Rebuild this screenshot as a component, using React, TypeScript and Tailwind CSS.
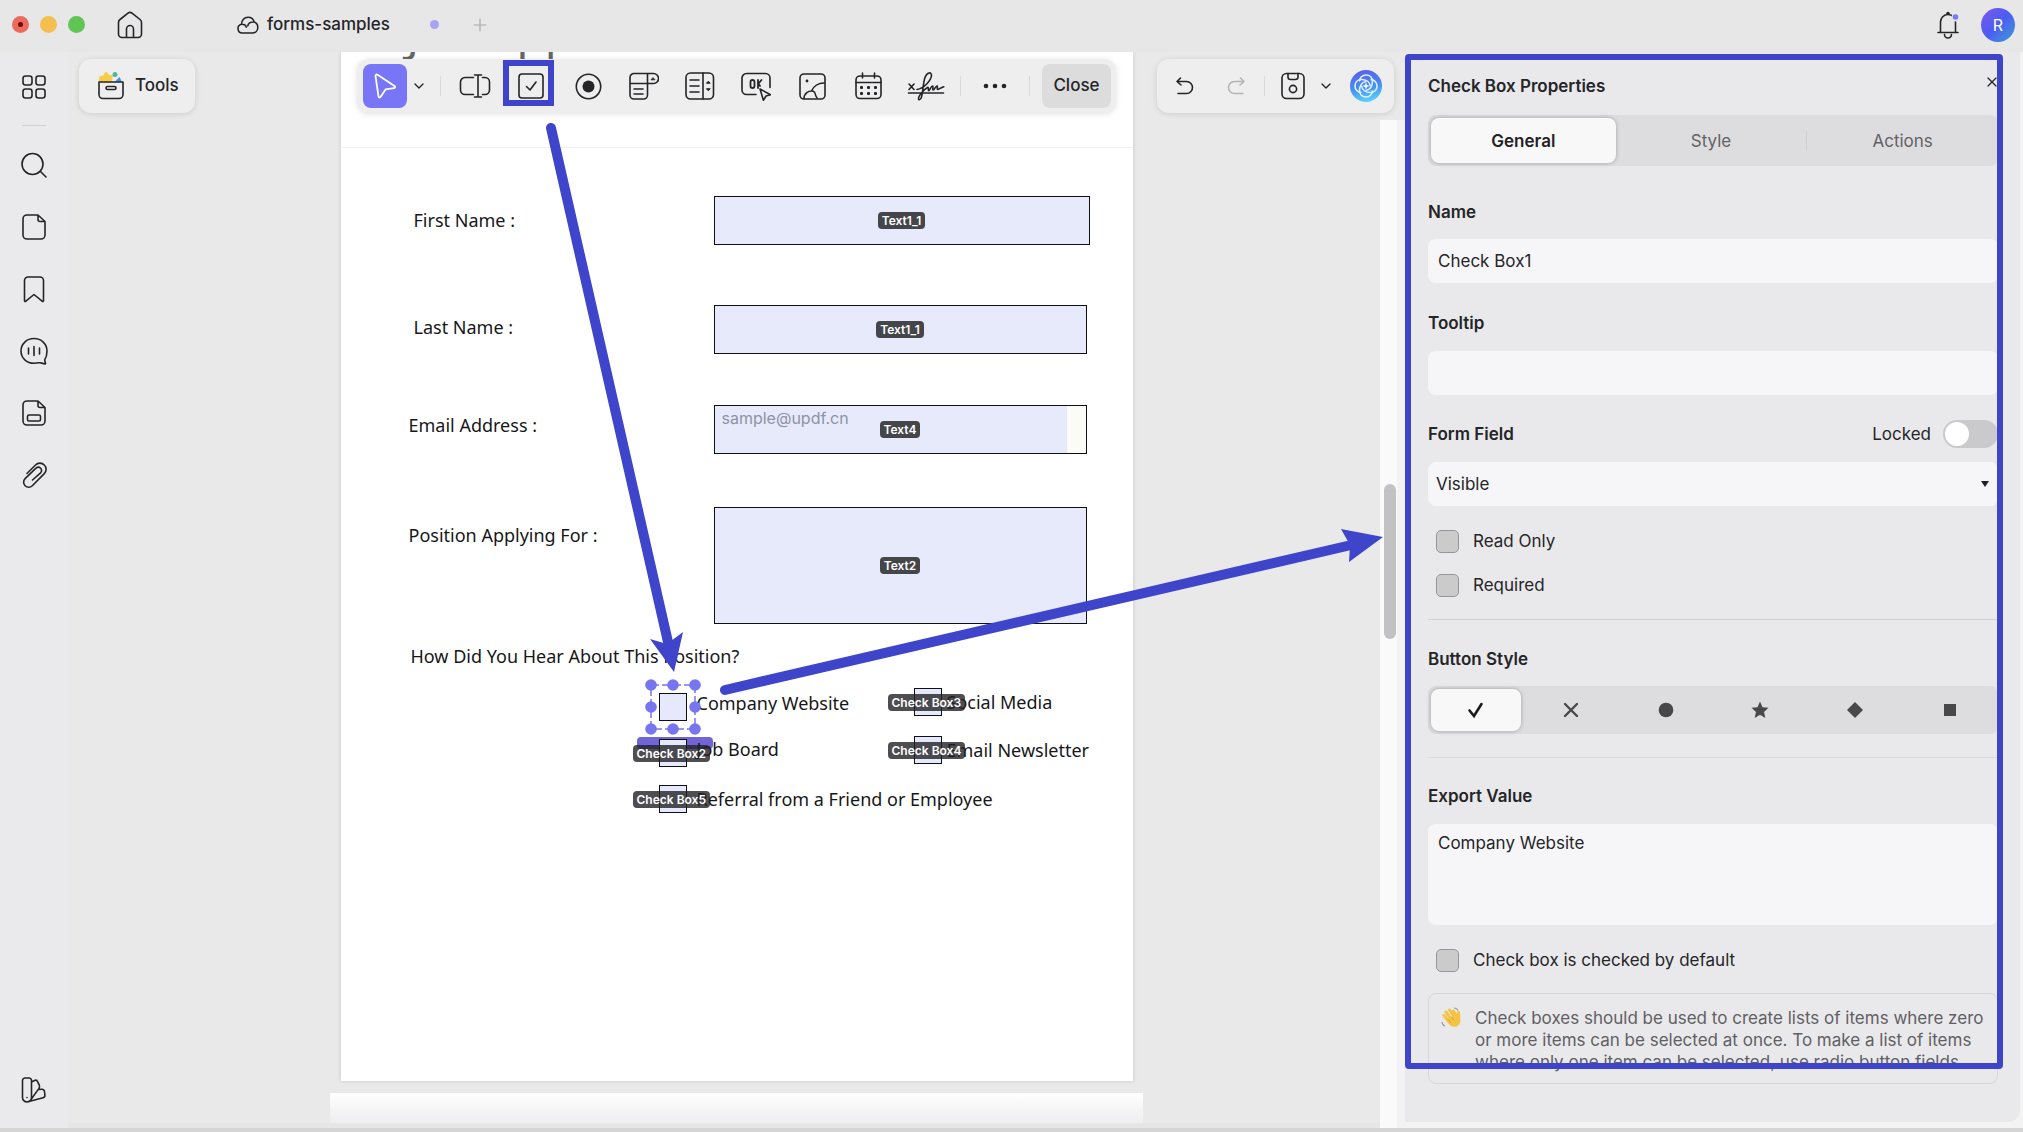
import type { ReactNode } from 'react';
import { useState } from 'react';
import { ChevronDown, Plus, X } from 'lucide-react';

type IconProps = {
  w: number;
  h: number;
  children: ReactNode;
  className?: string;
};

// outline icon, drawn at its natural size
function Icon({ w, h, children, className = '' }: IconProps) {
  return (
    <svg
      width={w}
      height={h}
      viewBox={`0 0 ${w} ${h}`}
      fill="none"
      stroke="currentColor"
      strokeWidth={1.6}
      strokeLinecap="round"
      strokeLinejoin="round"
      className={`shrink-0 ${className}`}
      aria-hidden="true"
    >
      {children}
    </svg>
  );
}

const sidebarItems = [
  {
    label: 'Search',
    icon: (
      <Icon w={28} h={28}>
        <circle cx="12.5" cy="13" r="10.5" />
        <path d="M20.5 20.5 26 26" />
      </Icon>
    ),
  },
  {
    label: 'Pages',
    icon: (
      <Icon w={28} h={28}>
        <path d="M18 2H7a4 4 0 0 0-4 4v16a4 4 0 0 0 4 4h14a4 4 0 0 0 4-4V8.500zM18 2v4.500a2 2 0 0 0 2 2h5" />
      </Icon>
    ),
  },
  {
    label: 'Bookmarks',
    icon: (
      <Icon w={28} h={28}>
        <path d="M8 2h12a3.500 3.500 0 0 1 3.500 3.500V25.500a.8.8 0 0 1-1.400.7L14 19.500l-8.100 6.700a.8.8 0 0 1-1.400-.7V5.500A3.500 3.500 0 0 1 8 2z" />
      </Icon>
    ),
  },
  {
    label: 'Comments',
    icon: (
      <Icon w={28} h={28}>
        <path d="M14 1.500C6.800 1.500 1 6.800 1 14s5.800 12.200 13 12.200c2.500 0 4.600-.3 6.300-.5 1.500.4 3.600 1.300 5 1.200.8-.1-.8-2.700-.5-4.200C26.300 20.300 27 17.400 27 14 27 6.800 21.200 1.500 14 1.500zM8.500 11v6M14 9.500v9M19.500 11v6" />
      </Icon>
    ),
  },
  {
    label: 'Form fields',
    icon: (
      <Icon w={28} h={28}>
        <path d="M18 2H7a4 4 0 0 0-4 4v16a4 4 0 0 0 4 4h14a4 4 0 0 0 4-4V8.500zM18 2v4.500a2 2 0 0 0 2 2h5" />
        <rect x="7.500" y="16" width="13" height="6" rx="1.500" />
      </Icon>
    ),
  },
  {
    label: 'Attachments',
    icon: (
      <Icon w={28} h={28}>
        <path d="M7 12.500 15.500 4a6 6 0 0 1 8.800 0 6 6 0 0 1 0 8.600L12.300 24.700a5 5 0 0 1-7.200 0 5 5 0 0 1 0-7.100L16 7.200a3.200 3.200 0 0 1 4.600 4.600L12.500 19" />
      </Icon>
    ),
  },
];

const cursorIcon = (
  <Icon w={24} h={28}>
    <path
      d="M2.500 4.200c-.2-1.300 1-2.100 2.100-1.400L21.500 14c1.100.8.700 2-.6 2.200l-8.200 1.100-5 7.500c-.7 1.100-2 .8-2.200-.4z"
      strokeWidth={1.8}
    />
  </Icon>
);

const textFieldIcon = (
  <Icon w={32} h={26}>
    <path d="M14.500 4.500H6a4.500 4.500 0 0 0-4.500 4.500v8A4.500 4.500 0 0 0 6 21.500h8.500M23.500 4.500H26A4.500 4.500 0 0 1 30.500 9v8a4.500 4.500 0 0 1-4.500 4.500h-2.500M19 2v22M15.500 2h7M15.500 24h7" />
  </Icon>
);

const checkBoxIcon = (
  <Icon w={26} h={26}>
    <rect x="1" y="1" width="24" height="24" rx="3" />
    <path d="m8.500 13.500 3.500 3.500 6-8" />
  </Icon>
);

const formTools = [
  {
    label: 'Radio Button',
    className: 'w-8',
    icon: (
      <Icon w={27} h={27}>
        <circle cx="13.500" cy="13.500" r="12.200" />
        <circle cx="13.500" cy="13.500" r="6" fill="currentColor" stroke="none" />
      </Icon>
    ),
  },
  {
    label: 'Dropdown',
    className: 'w-8',
    icon: (
      <Icon w={30} h={28}>
        <path d="M24 1.500H5a4 4 0 0 0-4 4V23a4 4 0 0 0 4 4h9.500a4 4 0 0 0 4-4V1.500M1 11.500h23.500a5 5 0 0 0 0-10M5 17h9M5 22h9" />
        <path d="m22.300 7.500 1.700-1.800 1.700 1.800z" fill="currentColor" strokeWidth={1} />
      </Icon>
    ),
  },
  {
    label: 'List Box',
    className: 'w-8',
    icon: (
      <Icon w={30} h={28}>
        <rect x="1" y="1" width="27.500" height="26" rx="4.500" />
        <path d="M18 1v26M5 8h9M5 14h9M5 20h9" />
        <path d="m21.700 11 1.600-1.800L24.900 11zM21.700 17l1.600 1.800 1.600-1.800z" fill="currentColor" strokeWidth={1} />
      </Icon>
    ),
  },
  {
    label: 'Push Button',
    className: 'w-8',
    icon: (
      <Icon w={30} h={30}>
        <path d="M15 23.500H5.500a4.500 4.500 0 0 1-4.500-4.500V7a4.500 4.500 0 0 1 4.500-4.500h19A4.500 4.500 0 0 1 29 7v9.500" />
        <rect x="9.500" y="9" width="4" height="8" rx="2" strokeWidth={1.800} />
        <path d="M17 9v8M20.500 9 17.500 12.500 19 15" strokeWidth={1.800} />
        <path d="m19 18 10.500 5.700-4.500 1.300-2.600 4.300z" />
      </Icon>
    ),
  },
  {
    label: 'Image',
    className: 'w-8',
    icon: (
      <Icon w={27} h={27}>
        <rect x="1" y="1" width="25" height="25" rx="4" />
        <path d="M5 25.500a7.500 7.500 0 0 1 9.300-7.300 3 3 0 0 1 1.800 2.300c.3 1.700 1 3.200 2 4.500M12.500 18c2-4.800 7-8.200 13-8" />
        <circle cx="8" cy="8" r="1.400" fill="currentColor" stroke="none" />
      </Icon>
    ),
  },
  {
    label: 'Date',
    className: 'w-8',
    icon: (
      <Icon w={27} h={28}>
        <rect x="1" y="4" width="25" height="22.500" rx="4" />
        <path d="M1 10.500h25M7.500 1v5M19.500 1v5" />
        <g fill="currentColor" stroke="none">
          <rect x="5" y="14" width="3" height="3" rx="1" />
          <rect x="12" y="14" width="3" height="3" rx="1" />
          <rect x="19" y="14" width="3" height="3" rx="1" />
          <rect x="5" y="20" width="3" height="3" rx="1" />
          <rect x="12" y="20" width="3" height="3" rx="1" />
          <rect x="19" y="20" width="3" height="3" rx="1" />
        </g>
      </Icon>
    ),
  },
  {
    label: 'Signature',
    className: 'w-9',
    icon: (
      <Icon w={38} h={30}>
        <path d="m2 13 5 5.500M7 13l-5 5.500M1.500 22h35" />
        <path d="M10 18.500c7-1 14-9 14.500-14C24.500.5 20 1 18 6.500c-2 5.500-2 14.500-3.500 19.500-.8 3-3 3.500-3 1.500 0-3 6-9.500 9-11 1.500-.7.500 2.500 1 3 1 .8 2.500-4.500 4-4.500 1.200 0-.5 4 .8 4 1.200 0 2.200-4 3.700-4 1.200 0-.5 3.500.8 3.500 1 0 3-2 6-2.800" />
      </Icon>
    ),
  },
];

function FieldTag({ children }: { children: ReactNode }) {
  return (
    <span className="rounded-sm bg-[#45464a] px-1 text-[12px] leading-[17px] font-semibold text-white">{children}</span>
  );
}

const textFields = [
  { id: 'first-name', label: 'First Name :', tag: 'Text1_1', row: 'mt-12 pl-[73px]', box: 'mr-[43px] h-[49px] w-[376px] bg-[#e6eafb]', text: 'pt-3' },
  { id: 'last-name', label: 'Last Name :', tag: 'Text1_1', row: 'mt-[60px] pl-[73px]', box: 'mr-[46px] h-[49px] w-[373px] bg-[#e6eafb]', text: 'pt-[10px]' },
  {
    id: 'email',
    label: 'Email Address :',
    tag: 'Text4',
    row: 'mt-[51px] pl-[68px]',
    box: 'mr-[46px] h-[49px] w-[373px] bg-linear-to-r from-[#e6eafb] from-95% to-[#fbfcf8] to-95%',
    text: 'pt-2',
    value: 'sample@updf.cn',
  },
  { id: 'position', label: 'Position Applying For :', tag: 'Text2', row: 'mt-[53px] pl-[68px]', box: 'mr-[46px] h-[117px] w-[373px] bg-[#e6eafb]', text: 'pt-4' },
];

type BoxFieldProps = { label: string; tag?: string; selected?: boolean; className?: string };

function BoxField({ label, tag, selected, className = 'gap-[10px]' }: BoxFieldProps) {
  return (
    <label className={`relative flex items-center ${className}`}>
      <input type="checkbox" className="size-7 shrink-0 appearance-none border border-[#101014] bg-[#e6e8fb]" />
      <span className="whitespace-nowrap">{label}</span>
      {tag && (
        <span className="absolute -left-[26px] flex rounded-sm bg-[#222225]/80 px-1 text-[12px] leading-[17px] font-semibold text-white font-[Inter,sans-serif]">
          {tag}
        </span>
      )}
      {selected && (
        <svg className="absolute -left-[15px] -top-[15px]" width="58" height="58" fill="#7775ef" aria-hidden="true">
          <rect x="7" y="7" width="44" height="44" fill="none" stroke="#7775ef" strokeWidth="1.500" strokeDasharray="8 3" />
          {[7, 29, 51].map((x) =>
            [7, 29, 51].map((y) => (x === 29 && y === 29 ? null : <circle key={`${x}-${y}`} cx={x} cy={y} r="5.800" />))
          )}
        </svg>
      )}
    </label>
  );
}

function DocumentPage() {
  return (
    <div className="relative h-[1029px] w-[792px] shrink-0 bg-white text-[18px] leading-6 text-[#17171a] shadow-[0_0_4px_rgba(0,0,0,0.15)] font-['Noto_Sans',sans-serif]">
      <div className="flex h-24 items-start border-b border-[#f1f1f3] pl-[66px]">
        <h1 className="-mt-[46px] text-[46px] leading-[56px] whitespace-nowrap text-[#666]">Job Application Form</h1>
      </div>

      {textFields.map((field) => (
        <div key={field.id} className={`flex ${field.row}`}>
          <label htmlFor={field.id} className={`flex-1 ${field.text}`}>
            {field.label}
          </label>
          <div className={`relative flex items-center justify-center border border-[#101014] font-[Inter,sans-serif] ${field.box}`}>
            <input
              id={field.id}
              defaultValue={field.value}
              className="absolute inset-0 h-6 px-[7px] text-[16px] text-[#8f93a6] outline-none"
            />
            <FieldTag>{field.tag}</FieldTag>
          </div>
        </div>
      ))}

      <p className="mt-5 pl-[70px]">How Did You Hear About This Position?</p>
      <div className="mt-5 flex">
        <div className="relative ml-[318px] flex w-[255px] flex-col gap-[18px] pt-[5px]">
          <span className="absolute -left-[22px] top-[49px] h-3 w-[76px] rounded-sm bg-[#7064d8]" />
          <BoxField label="Company Website" selected className="gap-[10px] [&>span]:pb-2 [&>span]:leading-5" />
          <BoxField label="Job Board" tag="Check Box2" className="gap-[10px] [&>span:first-of-type]:pb-2 [&>span:first-of-type]:leading-5" />
          <BoxField label="Referral from a Friend or Employee" tag="Check Box5" />
        </div>
        <div className="flex flex-col gap-5">
          <BoxField label="Social Media" tag="Check Box3" className="gap-[5px]" />
          <BoxField label="Email Newsletter" tag="Check Box4" className="gap-[5px]" />
        </div>
      </div>

      <svg className="pointer-events-none absolute left-0 top-0 overflow-visible" width="792" height="1029" aria-hidden="true">
        <g stroke="#3f45cb" strokeWidth="10" strokeLinecap="round">
          <path d="M210 76 327 590" />
          <path d="M384 638 1006 494" />
        </g>
        <path d="m309 587 17 5 16-12-9 40zM1000 477l9 16-1 17 34-25z" fill="#3f45cb" />
      </svg>
    </div>
  );
}

function FormToolbar() {
  return (
    <div className="flex h-[54px] items-center rounded-xl bg-[#eeeeef] pl-[6px] pr-[5px] shadow-[0_1px_6px_rgba(0,0,0,0.12)]">
      <button aria-label="Select" className="flex size-11 items-center justify-center rounded-lg bg-[#7876f6] text-white">
        {cursorIcon}
      </button>
      <button aria-label="Select options" className="flex w-[23px] justify-center">
        <ChevronDown size={16} />
      </button>
      <span className="ml-[10px] h-5 w-px bg-[#d9d9db]" />
      <button aria-label="Text Field" className="ml-[18px]">
        {textFieldIcon}
      </button>
      <button aria-label="Check Box" className="relative ml-[27px]">
        {checkBoxIcon}
        <span className="absolute -left-[15px] -right-[10px] -top-[13px] -bottom-[7px] border-6 border-[#3f45cb]" />
      </button>
      <div className="ml-7 flex items-center gap-6">
        {formTools.map((tool) => (
          <button key={tool.label} aria-label={tool.label} className={`flex justify-center ${tool.className}`}>
            {tool.icon}
          </button>
        ))}
      </div>
      <span className="ml-4 h-5 w-px bg-[#d9d9db]" />
      <button aria-label="More" className="ml-[22px]">
        <Icon w={24} h={6}>
          <g fill="currentColor" stroke="none">
            <circle cx="3" cy="3" r="2.300" />
            <circle cx="12" cy="3" r="2.300" />
            <circle cx="21" cy="3" r="2.300" />
          </g>
        </Icon>
      </button>
      <span className="ml-[22px] h-5 w-px bg-[#d9d9db]" />
      <button className="ml-3 h-11 w-[69px] rounded-lg bg-[#dcdcdd] text-[17px] font-medium">Close</button>
    </div>
  );
}

const petal = 'M9.500 11.500C9.500 7.500 12.500 5 16 5c4 0 6.500 2.800 6.500 6.500 0 4.500-2.500 8.500-7 9';

function HistoryToolbar() {
  return (
    <div className="flex h-[54px] w-[237px] items-center rounded-xl bg-[#eeeeef] pl-[18px] shadow-[0_1px_6px_rgba(0,0,0,0.12)]">
      <button aria-label="Undo">
        <Icon w={20} h={20}>
          <path d="M5.500 2 2 5.500 6 9M2 5.500h9.500a6 6 0 0 1 0 12H3" />
        </Icon>
      </button>
      <button aria-label="Redo" className="ml-[31px] text-[#b4b4b6]">
        <Icon w={20} h={20}>
          <path d="M14.500 2 18 5.500 14 9M18 5.500H8.500a6 6 0 0 0 0 12H17" />
        </Icon>
      </button>
      <span className="ml-[18px] h-5 w-px bg-[#d9d9db]" />
      <button aria-label="Save" className="ml-4">
        <Icon w={24} h={28}>
          <rect x="1" y="1.500" width="22" height="25" rx="4.500" />
          <path d="M7 1.500V5a2.500 2.500 0 0 0 2.500 2.500h5A2.500 2.500 0 0 0 17 5V1.500" />
          <circle cx="12" cy="17" r="3.600" />
        </Icon>
      </button>
      <button aria-label="Save options" className="ml-[13px]">
        <ChevronDown size={16} />
      </button>
      <button aria-label="Assistant" className="ml-4">
        <svg width="32" height="32" viewBox="0 0 32 32" fill="none" stroke="#dff3ff" strokeWidth="1.600" aria-hidden="true">
          <defs>
            <linearGradient id="assistant" x1="0.400" y1="0" x2="0.600" y2="1">
              <stop offset="0" stopColor="#5a5fee" />
              <stop offset="0.550" stopColor="#4590f4" />
              <stop offset="1" stopColor="#5ed5f8" />
            </linearGradient>
          </defs>
          <circle cx="16" cy="16" r="16" fill="url(#assistant)" stroke="none" />
          {[0, 90, 180, 270].map((angle) => (
            <path key={angle} d={petal} transform={`rotate(${angle} 16 16)`} />
          ))}
          <path d="m16 12.500 1 2.500 2.500 1-2.500 1-1 2.500-1-2.500-2.500-1 2.500-1z" fill="#fff" stroke="none" />
        </svg>
      </button>
    </div>
  );
}

const styleShapes = [
  { name: 'Check', shape: <path d="m3.500 10.500 4.500 5.500 7.500-12" stroke="currentColor" strokeWidth="2.600" fill="none" strokeLinecap="round" /> },
  { name: 'Cross', shape: <path d="m4 4 12 12M16 4 4 16" stroke="currentColor" strokeWidth="2.400" strokeLinecap="round" /> },
  { name: 'Circle', shape: <circle cx="10" cy="10" r="7.300" /> },
  { name: 'Star', shape: <path d="m10 1.500 2.500 5.700 6 .6-4.500 4.100 1.300 6.100-5.300-3.200L4.700 18 6 11.900 1.500 7.800l6-.6z" /> },
  { name: 'Diamond', shape: <path d="m10 2 8 8-8 8-8-8z" /> },
  { name: 'Square', shape: <path d="M4 4h12v12H4z" /> },
];

function PanelCheckbox({ id, label }: { id: string; label: string }) {
  return (
    <div className="flex items-center gap-[14px] pl-2">
      <input id={id} type="checkbox" className="size-[23px] appearance-none rounded-[5px] border border-[#96969a] bg-[#cbcbcc]" />
      <label htmlFor={id}>{label}</label>
    </div>
  );
}

function PropertiesPanel() {
  const [name, setName] = useState('Check Box1');
  const inputClass = 'block h-11 w-full rounded-lg bg-[#f6f6f8] px-[10px] outline-none';

  return (
    <aside className="relative w-[618px] shrink-0 bg-[#f3f3f4] pb-[6px] pr-[3px]">
      <div className="h-full overflow-hidden rounded-br-xl bg-[#e9e9eb] pl-[23px] pr-[22px] text-[17px] leading-6">
        <div className="flex items-start justify-between pt-[22px]">
          <h2 className="font-semibold">Check Box Properties</h2>
          <button aria-label="Close panel" className="-mr-[2px]">
            <X size={16} strokeWidth={1.8} />
          </button>
        </div>

        <div className="mt-[17px] flex h-[51px] gap-[3px] rounded-lg bg-[#dddddf] p-[3px] text-[#626266]">
          <button className="flex-1 rounded-lg bg-[#f8f8f9] font-semibold text-[#222224] shadow-[0_0_4px_rgba(0,0,0,0.28)]">General</button>
          <button className="flex-1">Style</button>
          <span className="my-auto h-5 w-px bg-[#d0d0d2]" />
          <button className="flex-1">Actions</button>
        </div>

        <label htmlFor="name" className="mt-[34px] block font-semibold">
          Name
        </label>
        <input id="name" value={name} onChange={(e) => setName(e.target.value)} className={`mt-[15px] ${inputClass}`} />

        <label htmlFor="tooltip" className="mt-7 block font-semibold">
          Tooltip
        </label>
        <input id="tooltip" className={`mt-4 ${inputClass}`} />

        <div className="mt-[25px] flex h-7 items-center justify-between">
          <label htmlFor="visibility" className="font-semibold">
            Form Field
          </label>
          <label className="flex items-center gap-3">
            Locked
            <input
              type="checkbox"
              role="switch"
              className="h-7 w-[55px] appearance-none rounded-full bg-[#cacacc] p-[2px] before:block before:size-6 before:rounded-full before:bg-white before:content-['']"
            />
          </label>
        </div>
        <div className="relative mt-[14px]">
          <select id="visibility" className="block h-11 w-full appearance-none rounded-lg bg-[#f6f6f8] px-2 outline-none">
            <option>Visible</option>
          </select>
          <svg className="pointer-events-none absolute right-[9px] top-[18px]" width="8" height="8" fill="#222224" aria-hidden="true">
            <path d="M0 1h8L4 7z" />
          </svg>
        </div>

        <div className="mt-[23px] flex flex-col gap-5 border-b border-[#d2d2d5] pb-[22px]">
          <PanelCheckbox id="read-only" label="Read Only" />
          <PanelCheckbox id="required" label="Required" />
        </div>

        <h3 className="mt-[27px] font-semibold">Button Style</h3>
        <div className="mt-[15px] flex h-12 gap-[5px] rounded-lg bg-[#dddddf] p-[3px] text-[#48484b]">
          {styleShapes.map(({ name: shapeName, shape }, i) => (
            <button
              key={shapeName}
              aria-label={shapeName}
              className={`flex flex-1 items-center justify-center rounded-lg ${
                i === 0 ? 'bg-[#f8f8f9] text-[#1b1b1d] shadow-[0_0_4px_rgba(0,0,0,0.28)]' : ''
              }`}
            >
              <svg width="20" height="20" fill="currentColor" aria-hidden="true">
                {shape}
              </svg>
            </button>
          ))}
        </div>

        <div className="mt-[23px] border-t border-[#dadadc] pt-[26px]">
          <label htmlFor="export-value" className="block font-semibold">
            Export Value
          </label>
          <textarea
            id="export-value"
            defaultValue="Company Website"
            className="mt-4 block h-[101px] w-full resize-none rounded-lg bg-[#f6f6f8] px-[10px] py-[7px] outline-none"
          />
        </div>

        <div className="mt-[23px]">
          <PanelCheckbox id="checked-default" label="Check box is checked by default" />
        </div>

        <div className="mt-[21px] flex h-[91px] gap-3 rounded-lg border border-[#d7d7da] py-[13px] pl-3 text-[#606064]">
          <svg width="22" height="22" viewBox="0 0 22 22" className="shrink-0" aria-hidden="true">
            <path
              d="M3 8.500 8 15M5 5l5.500 7.500M8.500 3l5 7M12.500 4l3 6"
              stroke="#f5c343"
              strokeWidth="3"
              strokeLinecap="round"
            />
            <path d="M5 12.500 15 8l1-3c.5-1.500 3-1 3 .8 0 4 1.500 8.500-1 11.700-2.500 3-7 3-9.500.3z" fill="#f5c343" />
            <path d="m7 12 3 4M10 9.500l3 4" stroke="#dd9a2b" strokeWidth="0.900" />
            <path d="M13 1c2 0 3.300 1 4 2.500M1 15c.2 2 1.300 3.500 3 4" stroke="#9a9a9e" strokeWidth="1.200" fill="none" />
          </svg>
          <p className="w-[510px] text-[17px] leading-[22px]">
            Check boxes should be used to create lists of items where zero or more items can be selected at once. To make a list of items
            where only one item can be selected, use radio button fields.
          </p>
        </div>
      </div>
      <div className="pointer-events-none absolute bottom-[59px] left-0 right-5 top-[2px] rounded-sm border-6 border-[#3f45cb]" />
    </aside>
  );
}

function TitleBar() {
  return (
    <header className="flex h-[52px] shrink-0 items-center bg-[#e7e7e8] pb-[3px] pl-3 pr-2">
      <div className="flex gap-[11px]">
        <span className="flex size-[17px] items-center justify-center rounded-full bg-[#ec6a5e]">
          <span className="size-[5px] rounded-full bg-[#6b0d08]" />
        </span>
        <span className="size-[17px] rounded-full bg-[#f4bf4f]" />
        <span className="size-[17px] rounded-full bg-[#61c554]" />
      </div>
      <button aria-label="Home" className="ml-8">
        <Icon w={26} h={28}>
          <path d="M1.500 11.500v11.500a3.500 3.500 0 0 0 3.500 3.500h16a3.500 3.500 0 0 0 3.500-3.500V11.500a4 4 0 0 0-1.500-3L15 2.200a3.200 3.200 0 0 0-4 0L3 8.500a4 4 0 0 0-1.500 3zM9.500 26.500v-8.500a3.500 3.500 0 0 1 7 0v8.500" />
        </Icon>
      </button>
      <div className="ml-[94px] flex items-center text-[17px] font-medium">
        <Icon w={22} h={20}>
          <path d="M5.500 18a4.400 4.400 0 0 1-1-8.700C4.500 5.300 7.300 2.200 11 2.200c3.100 0 5.400 1.900 6.200 4.800 2.100.8 3.600 2.700 3.600 5.400 0 3.200-2.400 5.600-5.500 5.600zM4.500 9.300c2.500-.2 4.300 1 4.800 2.800M17.200 7c-3-.3-5.700 1-6.500 3.800" />
        </Icon>
        <span className="ml-2">forms-samples</span>
      </div>
      <span className="ml-10 size-[9px] rounded-full bg-[#a7a5f1]" />
      <button aria-label="New tab" className="ml-[31px] text-[#a9a9ab]">
        <Plus size={20} strokeWidth={1.4} />
      </button>
      <div className="ml-auto flex items-center gap-[21px]">
        <button aria-label="Notifications">
          <Icon w={24} h={28}>
            <path d="M2 21.500h20M4.500 21.500V11a7.500 7.500 0 0 1 15 0v10.500M11 3.500V2.500a1 1 0 0 1 2 0v1M8.500 23.500a3.500 3.500 0 0 0 7 0" />
            <circle cx="19.500" cy="6.500" r="4" fill="#e7e7e8" stroke="none" />
            <circle cx="19.500" cy="6" r="2.800" fill="#7a78f2" stroke="none" />
          </Icon>
        </button>
        <button className="size-[34px] rounded-full bg-linear-to-br from-[#7a58ee] via-[#4b5cf2] to-[#3f9bd0] text-[16px] text-white">R</button>
      </div>
    </header>
  );
}

function Sidebar() {
  return (
    <nav className="flex w-[68px] shrink-0 flex-col items-center bg-[#eaeaec] pb-[25px] pt-[22px]">
      <button aria-label="Thumbnails">
        <Icon w={26} h={26}>
          <rect x="2" y="2" width="9" height="9" rx="2.500" />
          <rect x="15" y="2" width="9" height="9" rx="2.500" />
          <rect x="2" y="15" width="9" height="9" rx="2.500" />
          <rect x="15" y="15" width="9" height="9" rx="2.500" />
        </Icon>
      </button>
      <span className="mt-[25px] h-px w-6 bg-[#cfcfd2]" />
      <div className="mt-[25px] flex flex-col gap-[34px]">
        {sidebarItems.map((item) => (
          <button key={item.label} aria-label={item.label}>
            {item.icon}
          </button>
        ))}
      </div>
      <button aria-label="Themes" className="mt-auto">
        <Icon w={26} h={26}>
          <path d="M4 1h4a2.500 2.500 0 0 1 2.500 2.500v17A4.500 4.500 0 0 1 6 25a4.500 4.500 0 0 1-4.500-4.500v-17A2.500 2.500 0 0 1 4 1zM10.500 5l3-1.500c1.300-.6 2.600 0 3.200 1.300l1.600 3.400c.5 1.200.3 2.200-.3 3.200L10 22.500M17.500 12.500l3.300-.3a2.500 2.500 0 0 1 2.700 2.300l.4 3.500a2.500 2.500 0 0 1-1.800 2.700L6 25" />
          <circle cx="6" cy="20.500" r="0.800" fill="currentColor" stroke="none" />
        </Icon>
      </button>
    </nav>
  );
}

export default function App() {
  return (
    <div className="flex h-screen flex-col overflow-hidden bg-[#d5d5d6] pb-1 text-[#252528] font-[Inter,sans-serif]">
      <TitleBar />
      <div className="flex min-h-0 flex-1 bg-[#f3f3f4]">
        <Sidebar />
        <main className="relative flex min-w-0 flex-1 flex-col items-center overflow-hidden bg-[#e9e9ea]">
          <div className="absolute bottom-0 right-0 top-[68px] w-[25px] border-r-8 border-[#f3f3f5] bg-[#fafafb]">
            <div className="ml-1 mt-[364px] h-[155px] w-3 rounded-full bg-[#c2c2c4]" />
          </div>
          <DocumentPage />
          <div className="mt-3 min-h-0 w-[813px] flex-1 bg-linear-to-b from-white to-[#eeedef]" />
          <div className="h-[5px] w-full bg-[#e6e6e7]" />
          <div className="absolute inset-x-[11px] top-[7px] grid grid-cols-[1fr_auto_1fr]">
            <button className="flex h-[54px] w-[116px] items-center gap-[11px] rounded-xl bg-[#eeeeef] pl-[19px] text-[17px] font-medium shadow-[0_1px_6px_rgba(0,0,0,0.12)]">
              <Icon w={26} h={30}>
                <path d="m8 1.500 2.500 3 3.500.5-1 5.500H1.500L2 6l4-1z" fill="#f6cd4a" stroke="#f6cd4a" />
                <circle cx="17" cy="3.500" r="2.500" fill="#4fb995" stroke="none" />
                <path d="m17 10.500 4.500-4.500 2.500 5z" fill="#3f8ff0" stroke="none" />
                <path d="M1 11h24v12.500a4 4 0 0 1-4 4H5a4 4 0 0 1-4-4z" />
                <rect x="8" y="15.500" width="10" height="3" rx="1.500" />
              </Icon>
              Tools
            </button>
            <FormToolbar />
            <div className="flex justify-end">
              <HistoryToolbar />
            </div>
          </div>
        </main>
        <PropertiesPanel />
      </div>
    </div>
  );
}
